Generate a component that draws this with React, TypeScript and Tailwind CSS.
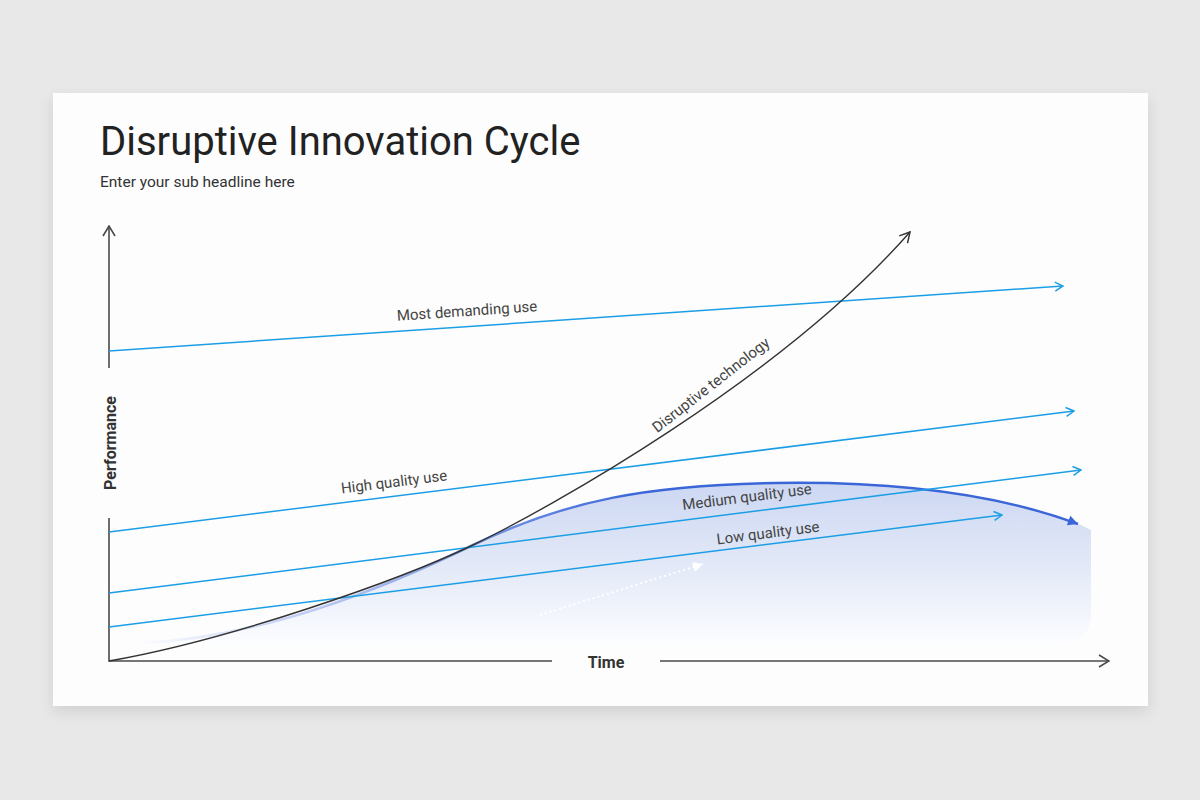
import React from "react";

const BLUE = "#1b9ee6";
const AXIS = "#4a4a4a";

function Chart() {
  return (
    <svg
      className="block w-full h-[517px]"
      viewBox="53 189 1095 517"
      xmlns="http://www.w3.org/2000/svg"
      fontFamily="Roboto, 'Liberation Sans', sans-serif"
    >
      <defs>
        <marker id="chevBlue" viewBox="0 0 12 12" refX="11" refY="6" markerWidth="12" markerHeight="12" orient="auto" markerUnits="userSpaceOnUse">
          <path d="M3,1.5 L11,6 L3,10.5" fill="none" stroke={BLUE} strokeWidth="1.5" />
        </marker>
        <marker id="chevBlack" viewBox="0 0 14 14" refX="13" refY="7" markerWidth="14" markerHeight="14" orient="auto" markerUnits="userSpaceOnUse">
          <path d="M3,1.5 L13,7 L3,12.5" fill="none" stroke="#333" strokeWidth="1.5" />
        </marker>
        <marker id="chevAxis" viewBox="0 0 14 14" refX="13" refY="7" markerWidth="14" markerHeight="14" orient="auto" markerUnits="userSpaceOnUse">
          <path d="M3,1 L13,7 L3,13" fill="none" stroke={AXIS} strokeWidth="1.6" />
        </marker>
        <marker id="triBlue" viewBox="0 0 12 12" refX="11" refY="6" markerWidth="12" markerHeight="12" orient="auto" markerUnits="userSpaceOnUse">
          <path d="M1,1 L11,6 L1,11 Z" fill="#3a66d8" />
        </marker>
        <marker id="triWhite" viewBox="0 0 12 12" refX="11" refY="6" markerWidth="12" markerHeight="12" orient="auto" markerUnits="userSpaceOnUse">
          <path d="M1,1 L11,6 L1,11 Z" fill="#ffffff" />
        </marker>
        <linearGradient id="fillGrad" gradientUnits="userSpaceOnUse" x1="0" y1="483" x2="0" y2="644">
          <stop offset="0" stopColor="#ccd7f2" />
          <stop offset="0.55" stopColor="#e4eaf8" />
          <stop offset="1" stopColor="#fcfdff" />
        </linearGradient>
        <linearGradient id="strokeGrad" gradientUnits="userSpaceOnUse" x1="140" y1="0" x2="640" y2="0">
          <stop offset="0" stopColor="#3a66d8" stopOpacity="0" />
          <stop offset="0.5" stopColor="#3a66d8" stopOpacity="0.45" />
          <stop offset="1" stopColor="#3a66d8" stopOpacity="1" />
        </linearGradient>
      </defs>

      {/* incumbent curve fill */}
      <path
        d="M140,643 C260,638 380,590 473,545 C566,500 650,485 775,483 C900,481 1000,495 1081,525 L1091,530 L1091,612 Q1091,644 1059,644 L140,644 Z"
        fill="url(#fillGrad)"
      />
      <path
        d="M140,643 C260,638 380,590 473,545 C566,500 650,485 775,483 C900,481 1000,495 1078,524"
        fill="none"
        stroke="url(#strokeGrad)"
        strokeWidth="2.5"
        markerEnd="url(#triBlue)"
      />

      {/* dotted white arrow */}
      <path d="M540,615 L703,564" stroke="#ffffff" strokeWidth="2" strokeDasharray="2 3" fill="none" markerEnd="url(#triWhite)" />

      {/* axes */}
      <path d="M109,368 L109,226" stroke={AXIS} strokeWidth="1.6" fill="none" markerEnd="url(#chevAxis)" />
      <path d="M109,518 L109,661 L552,661" stroke={AXIS} strokeWidth="1.6" fill="none" />
      <path d="M660,661 L1109,661" stroke={AXIS} strokeWidth="1.6" fill="none" markerEnd="url(#chevAxis)" />

      {/* blue use lines */}
      <path d="M109,351 L1063,286" stroke={BLUE} strokeWidth="1.5" fill="none" markerEnd="url(#chevBlue)" />
      <path d="M109,532 L1074,411" stroke={BLUE} strokeWidth="1.5" fill="none" markerEnd="url(#chevBlue)" />
      <path d="M109,593 L1081,470" stroke={BLUE} strokeWidth="1.5" fill="none" markerEnd="url(#chevBlue)" />
      <path d="M109,627 L1002,515" stroke={BLUE} strokeWidth="1.5" fill="none" markerEnd="url(#chevBlue)" />

      {/* disruptive technology curve */}
      <path d="M109,661 C230,640 400,580 473,545 C546,510 780,380 910,232" stroke="#333" strokeWidth="1.4" fill="none" markerEnd="url(#chevBlack)" />

      {/* labels */}
      <g fill="#444" fontSize="15">
        <text x="467" y="311" textAnchor="middle" dominantBaseline="central" transform="rotate(-3.9 467 311)">Most demanding use</text>
        <text x="394" y="482" textAnchor="middle" dominantBaseline="central" transform="rotate(-7.15 394 482)">High quality use</text>
        <text x="747" y="497" textAnchor="middle" dominantBaseline="central" transform="rotate(-7.2 747 497)">Medium quality use</text>
        <text x="768" y="533" textAnchor="middle" dominantBaseline="central" transform="rotate(-7.15 768 533)">Low quality use</text>
        <text x="711" y="385" textAnchor="middle" dominantBaseline="central" transform="rotate(-38 711 385)">Disruptive technology</text>
      </g>
      <g fill="#333" fontWeight="700" fontSize="16">
        <text x="110" y="443" textAnchor="middle" dominantBaseline="central" transform="rotate(-90 110 443)">Performance</text>
        <text x="606" y="662" textAnchor="middle" dominantBaseline="central">Time</text>
      </g>
    </svg>
  );
}

export default function App() {
  return (
    <div className="w-[1200px] h-[800px] bg-[#e9e8e9] pt-[93px] pl-[53px] font-['Roboto',_'Liberation_Sans',_sans-serif]">
      <div className="w-[1095px] h-[613px] bg-[#fdfdfd] shadow-[0_6px_14px_rgba(0,0,0,0.10)] flex flex-col">
        <div className="pt-[29px] px-[47px] h-[96px]">
          <h1 className="text-[40px] leading-[40px] font-normal text-[#222]">Disruptive Innovation Cycle</h1>
          <p className="mt-3 text-[15.5px] leading-[16px] text-[#333]">Enter your sub headline here</p>
        </div>
        <Chart />
      </div>
    </div>
  );
}
